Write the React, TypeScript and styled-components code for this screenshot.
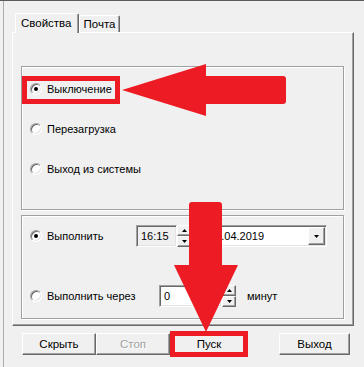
import React, { FC } from 'react';
import styled, { createGlobalStyle } from 'styled-components';

const GlobalStyle = createGlobalStyle`
  html, body {
    margin: 0;
    padding: 0;
    background: #f0f0f0;
    overflow: hidden;
  }
  body {
    font-family: "Liberation Sans", Arial, sans-serif;
    font-size: 11px;
    color: #000;
  }
`;

const red = '#ed1c24';

const Frame = styled.div`
  position: relative;
  width: 364px;
  height: 367px;
  box-sizing: border-box;
  border-top: 1px solid #5b5b5b;
  padding: 12px 0 0 12px;
  background: linear-gradient(to right, #f0f0f0 3px, #adadad 3px, #adadad 4px, #f0f0f0 4px);
`;

const TabStrip = styled.div`
  display: flex;
  align-items: flex-end;
  height: 19px;
  padding-left: 3px;
  position: relative;
  z-index: 1;
`;

const Tab = styled.div<{ $active?: boolean }>`
  box-sizing: border-box;
  height: ${(p) => (p.$active ? '20px' : '17px')};
  margin-bottom: ${(p) => (p.$active ? '-1px' : '0')};
  padding: ${(p) => (p.$active ? '3px 6px 0 5px' : '2px 4px 0 4px')};
  background: #f0f0f0;
  border-top: 1px solid #fff;
  border-left: 1px solid #fff;
  border-right: 1px solid #696969;
  box-shadow: inset -1px 0 0 #a0a0a0;
  border-radius: 2px 2px 0 0;
  white-space: nowrap;
  font-size: 11.5px;
`;

const Panel = styled.div`
  width: 342px;
  height: 294px;
  box-sizing: border-box;
  border-top: 1px solid #fff;
  border-left: 1px solid #fff;
  border-right: 1px solid #696969;
  border-bottom: 1px solid #696969;
  box-shadow: inset -1px -1px 0 #a0a0a0;
  padding: 33px 9px 5px 8px;
  display: flex;
  flex-direction: column;
  gap: 5px;
`;

const GroupBox = styled.div<{ $height: number; $padTop: number }>`
  box-sizing: border-box;
  height: ${(p) => p.$height}px;
  border: 1px solid #a0a0a0;
  box-shadow: inset 1px 1px 0 #fff, 1px 1px 0 #fff;
  padding: ${(p) => p.$padTop}px 8px 0 8px;
  display: flex;
  flex-direction: column;
`;

const RadioRow = styled.div<{ $gap?: number }>`
  display: flex;
  align-items: center;
  height: 20px;
  margin-bottom: ${(p) => p.$gap ?? 0}px;
`;

const OptionRow = styled.div<{ $gap?: number }>`
  display: flex;
  align-items: center;
  height: 22px;
  margin-bottom: ${(p) => p.$gap ?? 0}px;
`;

const RadioCircle = styled.span<{ $checked?: boolean }>`
  position: relative;
  flex: none;
  width: 12px;
  height: 12px;
  box-sizing: border-box;
  border-radius: 50%;
  background: #fff;
  border: 1px solid;
  border-color: #a0a0a0 #fff #fff #a0a0a0;
  box-shadow: inset 1px 1px 0 #696969, inset -1px -1px 0 #e3e3e3;

  &::after {
    content: '';
    display: ${(p) => (p.$checked ? 'block' : 'none')};
    position: absolute;
    left: 3px;
    top: 3px;
    width: 4px;
    height: 4px;
    border-radius: 50%;
    background: #000;
  }
`;

const Label = styled.span<{ $width?: number }>`
  margin-left: 5px;
  width: ${(p) => (p.$width ? `${p.$width}px` : 'auto')};
  flex: none;
  white-space: nowrap;
`;

const Field = styled.div<{ $width: number; $white?: boolean }>`
  box-sizing: border-box;
  width: ${(p) => p.$width}px;
  height: 22px;
  background: ${(p) => (p.$white ? '#fff' : '#f0f0f0')};
  border: 1px solid;
  border-color: #a0a0a0 #fff #fff #a0a0a0;
  box-shadow: inset 1px 1px 0 #696969, inset -1px -1px 0 #e3e3e3;
  display: flex;
  align-items: center;
  padding-left: 4px;
  font-size: 11px;
`;

const Spin = styled.div`
  display: flex;
  flex-direction: column;
  width: 14px;
  height: 22px;
  flex: none;
`;

const SpinButton = styled.div`
  flex: 1;
  box-sizing: border-box;
  border: 1px solid;
  border-color: #fff #696969 #696969 #fff;
  box-shadow: inset -1px -1px 0 #a0a0a0;
  background: #f0f0f0;
  display: flex;
  align-items: center;
  justify-content: center;
`;

const Spacer = styled.div<{ $width: number }>`
  width: ${(p) => p.$width}px;
  flex: none;
`;

const DropButton = styled.div`
  box-sizing: border-box;
  width: 17px;
  height: 18px;
  margin-left: auto;
  margin-right: 1px;
  border: 1px solid;
  border-color: #fff #696969 #696969 #fff;
  box-shadow: inset -1px -1px 0 #a0a0a0;
  background: #f0f0f0;
  display: flex;
  align-items: center;
  justify-content: center;
`;

const Unit = styled.span`
  margin-left: 11px;
`;

const ButtonRow = styled.div`
  display: flex;
  align-items: center;
  margin: 7px 0 0 10px;
`;

const Button = styled.div<{ $width: number; $ml?: number; $disabled?: boolean }>`
  box-sizing: border-box;
  width: ${(p) => p.$width}px;
  height: 22px;
  margin-left: ${(p) => p.$ml ?? 0}px;
  border: 1px solid;
  border-color: #fff #696969 #696969 #fff;
  box-shadow: inset -1px -1px 0 #a0a0a0;
  background: #f0f0f0;
  display: flex;
  align-items: center;
  justify-content: center;
  font-size: 11.5px;
  color: ${(p) => (p.$disabled ? '#a0a0a0' : '#000')};
  text-shadow: ${(p) => (p.$disabled ? '1px 1px 0 #fff' : 'none')};
`;

const Highlight = styled.div<{ $x: number; $y: number; $w: number; $h: number }>`
  position: absolute;
  left: ${(p) => p.$x}px;
  top: ${(p) => p.$y}px;
  width: ${(p) => p.$w}px;
  height: ${(p) => p.$h}px;
  box-sizing: border-box;
  border: 5px solid ${red};
  pointer-events: none;
`;

const Arrows = styled.svg`
  position: absolute;
  left: 0;
  top: -1px;
  pointer-events: none;
`;

const Tri: FC<{ up?: boolean }> = ({ up }) => (
  <svg width="5" height="3" viewBox="0 0 5 3">
    <polygon points={up ? '2.5,0 5,3 0,3' : '0,0 5,0 2.5,3'} fill="#000" />
  </svg>
);

const SpinBox: FC = () => (
  <Spin>
    <SpinButton><Tri up /></SpinButton>
    <SpinButton><Tri /></SpinButton>
  </Spin>
);

export default function App() {
  return (
    <>
      <GlobalStyle />
      <Frame>
        <TabStrip>
          <Tab $active>Свойства</Tab>
          <Tab>Почта</Tab>
        </TabStrip>
        <Panel>
          <GroupBox $height={144} $padTop={12}>
            <RadioRow $gap={20}>
              <RadioCircle $checked />
              <Label>Выключение</Label>
            </RadioRow>
            <RadioRow $gap={20}>
              <RadioCircle />
              <Label>Перезагрузка</Label>
            </RadioRow>
            <RadioRow>
              <RadioCircle />
              <Label>Выход из системы</Label>
            </RadioRow>
          </GroupBox>
          <GroupBox $height={104} $padTop={9}>
            <OptionRow $gap={38}>
              <RadioCircle $checked />
              <Label $width={89}>Выполнить</Label>
              <Field $width={41}>16:15</Field>
              <SpinBox />
              <Spacer $width={13} />
              <Field $width={123} $white>
                16.04.2019
                <DropButton><Tri /></DropButton>
              </Field>
            </OptionRow>
            <OptionRow>
              <RadioCircle />
              <Label $width={112}>Выполнить через</Label>
              <Field $width={63} $white>0</Field>
              <SpinBox />
              <Unit>минут</Unit>
            </OptionRow>
          </GroupBox>
        </Panel>
        <ButtonRow>
          <Button $width={74}>Скрыть</Button>
          <Button $width={74} $disabled>Стоп</Button>
          <Button $width={72} $ml={3}>Пуск</Button>
          <Button $width={71} $ml={34}>Выход</Button>
        </ButtonRow>
        <Highlight $x={22} $y={75} $w={98} $h={28} />
        <Highlight $x={170} $y={330} $w={78} $h={26} />
        <Arrows width="364" height="367" viewBox="0 0 364 367">
          <path
            d="M122 90 L206 64 L206 76 L283 76 Q286 76 286 79 L286 101 Q286 104 283 104 L206 104 L206 116 Z"
            fill={red}
          />
          <path
            d="M189 205 Q189 202 192 202 L219 202 Q222 202 222 205 L222 265 L238 265 L206 332 L174 265 L189 265 Z"
            fill={red}
          />
        </Arrows>
      </Frame>
    </>
  );
}
